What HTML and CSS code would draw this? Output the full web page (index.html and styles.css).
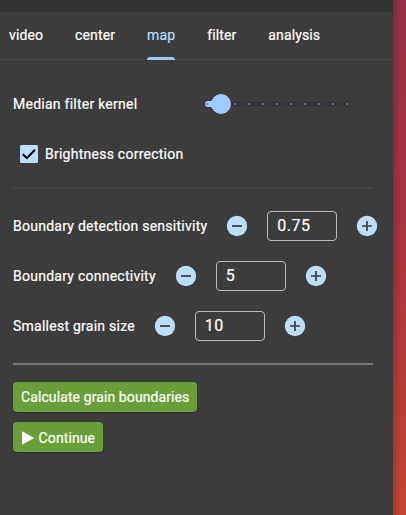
FILE: index.html
```html
<!DOCTYPE html>
<html lang="en">
<head>
<meta charset="utf-8">
<title>Grain map</title>
<link rel="stylesheet" href="styles.css">
</head>
<body>
<main class="panel">
  <div class="strip"></div>
  <nav class="tabs">
    <span class="tab">video</span>
    <span class="tab">center</span>
    <span class="tab active">map</span>
    <span class="tab">filter</span>
    <span class="tab">analysis</span>
  </nav>
  <section class="content">
    <div class="row kernel">
      <span class="label">Median filter kernel</span>
      <svg class="slider" width="146" height="20" viewBox="0 0 146 20">
        <rect x="2" y="8" width="142" height="4" rx="2" fill="#34363d"/>
        <rect x="0" y="7" width="20" height="6" rx="3" fill="#a0cafd"/>
        <circle cx="2" cy="10" r="1" fill="#5a7599"/>
        <g fill="#696a70">
          <rect x="29" y="9" width="2" height="2"/><rect x="43" y="9" width="2" height="2"/><rect x="57" y="9" width="2" height="2"/><rect x="71" y="9" width="2" height="2"/><rect x="85" y="9" width="2" height="2"/><rect x="99" y="9" width="2" height="2"/><rect x="113" y="9" width="2" height="2"/><rect x="127" y="9" width="2" height="2"/><rect x="141" y="9" width="2" height="2"/>
        </g>
        <circle cx="16" cy="10" r="10" fill="#a0cafd"/>
      </svg>
    </div>
    <div class="row check">
      <svg width="18" height="18" viewBox="0 0 18 18"><rect width="18" height="18" rx="1.5" fill="#bbdefb"/><path d="M2.8 9.2 6.9 13.2 15 4.8" fill="none" stroke="#000" stroke-width="2"/></svg>
      <span class="label">Brightness correction</span>
    </div>
    <div class="divider"></div>
    <div class="row stepper">
      <span class="label sensitivity">Boundary detection sensitivity</span>
      <svg class="step" viewBox="0 0 20 20"><circle cx="10" cy="10" r="10.2"/><path d="M5 10H15"/></svg>
      <div class="field">0.75</div>
      <svg class="step" viewBox="0 0 20 20"><circle cx="10" cy="10" r="10.2"/><path d="M5 10H15M10 5V15"/></svg>
    </div>
    <div class="row stepper">
      <span class="label connectivity">Boundary connectivity</span>
      <svg class="step" viewBox="0 0 20 20"><circle cx="10" cy="10" r="10.2"/><path d="M5 10H15"/></svg>
      <div class="field">5</div>
      <svg class="step" viewBox="0 0 20 20"><circle cx="10" cy="10" r="10.2"/><path d="M5 10H15M10 5V15"/></svg>
    </div>
    <div class="row stepper">
      <span class="label grain">Smallest grain size</span>
      <svg class="step" viewBox="0 0 20 20"><circle cx="10" cy="10" r="10.2"/><path d="M5 10H15"/></svg>
      <div class="field">10</div>
      <svg class="step" viewBox="0 0 20 20"><circle cx="10" cy="10" r="10.2"/><path d="M5 10H15M10 5V15"/></svg>
    </div>
    <div class="divider strong"></div>
    <div class="actions">
      <div class="button calculate">Calculate grain boundaries</div>
      <div class="button continue"><svg width="13" height="14" viewBox="0 0 13 14"><path d="M0 .3 12.2 7 0 13.7Z" fill="#fff"/></svg><span>Continue</span></div>
    </div>
  </section>
</main>
</body>
</html>
```
FILE: styles.css
```css
* { box-sizing: border-box; }
body {
  margin: 0;
  width: 406px;
  height: 515px;
  overflow: hidden;
  background: linear-gradient(90deg, rgba(0,0,0,.16) 393px, transparent 402px), linear-gradient(#963048, #ab373e 50%, #c64533);
  font: 400 14px/20px Roboto, sans-serif;
  letter-spacing: .25px;
  color: #fff;
  -webkit-text-stroke: .2px;
}
.panel { width: 393px; height: 515px; background: #3c3c3c; }
.strip { height: 12px; background: #323232; }
.tabs {
  display: flex;
  gap: 32px;
  height: 48px;
  padding-left: 9px;
  border-bottom: 1px solid #46474e;
  letter-spacing: .12px;
}
.tab { height: 48px; line-height: 46px; white-space: nowrap; }
.active { display: flex; flex-direction: column; color: #bbdefb; }
.active::after {
  content: "";
  flex: none;
  height: 3px;
  margin-top: -1px;
  border-radius: 3px 3px 0 0;
  background: #a0cafd;
}
.content { padding: 29px 0 0 13px; }
.row { display: flex; align-items: center; height: 30px; }
.label { white-space: nowrap; }
.slider { margin-left: auto; }
.kernel { width: 338px; }
.check { margin-top: 20px; padding-left: 7px; gap: 7px; }
.divider { width: 360px; height: 2px; margin: 18px 0 22px; background: #43434a; }
.stepper { gap: 20px; }
.stepper + .stepper { margin-top: 20px; }
.sensitivity { width: 194.3px; }
.connectivity { width: 142.7px; }
.grain { width: 121.7px; }
.step { width: 20px; height: 20px; overflow: visible; fill: #bbdefb; }
.step path { stroke: #3c3c3c; stroke-width: 1.7; }
.field {
  width: 70px;
  height: 30px;
  padding-left: 9px;
  border: 1px solid #b9b9b9;
  border-radius: 4px;
  font-size: 16px;
  line-height: 27px;
  letter-spacing: .5px;
}
.strong { margin: 22px 0 17px; background: #777; }
.actions { display: flex; flex-direction: column; gap: 10px; letter-spacing: .1px; }
.button {
  display: flex;
  align-items: center;
  height: 30px;
  padding-left: 8px;
  border-radius: 4px;
  background: #689f38;
  box-shadow: 0 1px 1px rgba(0,0,0,.2);
  white-space: nowrap;
}
.calculate { width: 184px; }
.continue { width: 90px; gap: 3.6px; padding-left: 9px; padding-top: 1px; }
```
